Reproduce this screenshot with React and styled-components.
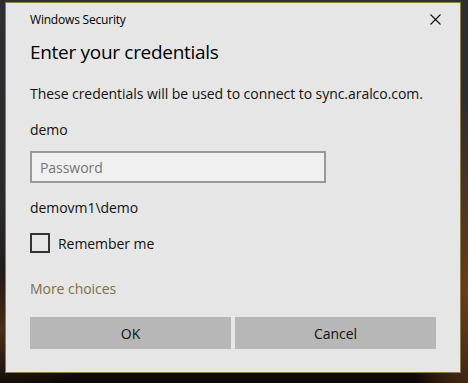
import React from 'react';
import styled, { createGlobalStyle } from 'styled-components';

const GlobalStyle = createGlobalStyle`
  html, body {
    margin: 0;
    padding: 0;
    width: 468px;
    height: 383px;
    overflow: hidden;
  }
  body {
    font-family: "Open Sans", "Noto Sans", sans-serif;
    background:
      radial-gradient(ellipse 60px 200px at 468px 290px, #6a3e1c 0%, rgba(106, 62, 28, 0) 100%),
      radial-gradient(ellipse 120px 60px at 0px 330px, #4a2e18 0%, rgba(74, 46, 24, 0) 100%),
      linear-gradient(180deg, #2e2e33 0%, #2a2829 55%, #1a120c 85%, #0c0806 100%);
  }
`;

const Dialog = styled.div`
  margin: 2px 0 0 5px;
  height: 369px;
  background: #e6e6e6;
  border: 1px solid #8c7c4c;
  padding: 0 24px;
  box-sizing: content-box;
  width: 406px;
  color: #111;
`;

const TitleBar = styled.div`
  height: 32px;
  display: flex;
  align-items: center;
  justify-content: space-between;
  font-size: 12px;
  letter-spacing: -0.2px;
  color: #000;
`;

const CloseButton = styled.button`
  border: none;
  background: none;
  padding: 0;
  margin-right: -6px;
  width: 14px;
  height: 14px;
  display: flex;
  align-items: center;
  justify-content: center;
  cursor: pointer;
`;

const Heading = styled.h1`
  margin: 0;
  height: 34px;
  line-height: 34px;
  font-size: 19px;
  letter-spacing: -0.3px;
  font-weight: 400;
  color: #000;
`;

const Text = styled.div`
  font-size: 14px;
  letter-spacing: -0.05px;
  line-height: 20px;
  white-space: nowrap;
  margin-top: ${p => p.$gap || 0}px;
  color: ${p => p.$color || '#111'};
`;

const PasswordInput = styled.input`
  display: block;
  margin-top: 11px;
  width: 296px;
  height: 32px;
  box-sizing: border-box;
  border: 2px solid #999;
  background: #f0f0f0;
  padding: 0 8px;
  font-family: inherit;
  font-size: 14px;
  letter-spacing: -0.05px;
  color: #111;
  outline: none;
  &::placeholder {
    color: #767676;
  }
`;

const CheckRow = styled.label`
  display: flex;
  align-items: center;
  gap: 8px;
  margin-top: 15px;
  font-size: 14px;
  letter-spacing: -0.05px;
  cursor: pointer;
`;

const Box = styled.span`
  width: 20px;
  height: 20px;
  box-sizing: border-box;
  border: 2px solid #333;
  background: transparent;
`;

const Buttons = styled.div`
  display: grid;
  grid-template-columns: 1fr 1fr;
  gap: 4px;
  margin-top: 18px;
`;

const Button = styled.button`
  height: 32px;
  border: none;
  background: #b7b7b7;
  font-family: inherit;
  font-size: 14px;
  letter-spacing: -0.05px;
  color: #111;
  cursor: pointer;
`;

export default function App() {
  return (
    <>
      <GlobalStyle />
      <Dialog>
        <TitleBar>
          <span>Windows Security</span>
          <CloseButton aria-label="Close">
            <svg width="11" height="11" viewBox="0 0 11 11">
              <path d="M0.5 0.5 L10.5 10.5 M10.5 0.5 L0.5 10.5" stroke="#111" strokeWidth="1.1" />
            </svg>
          </CloseButton>
        </TitleBar>
        <Heading>Enter your credentials</Heading>
        <Text $gap={15}>These credentials will be used to connect to sync.aralco.com.</Text>
        <Text $gap={16}>demo</Text>
        <PasswordInput type="password" placeholder="Password" />
        <Text $gap={15}>demovm1\demo</Text>
        <CheckRow>
          <Box />
          Remember me
        </CheckRow>
        <Text $gap={26} $color="#7d6f48">More choices</Text>
        <Buttons>
          <Button>OK</Button>
          <Button>Cancel</Button>
        </Buttons>
      </Dialog>
    </>
  );
}
